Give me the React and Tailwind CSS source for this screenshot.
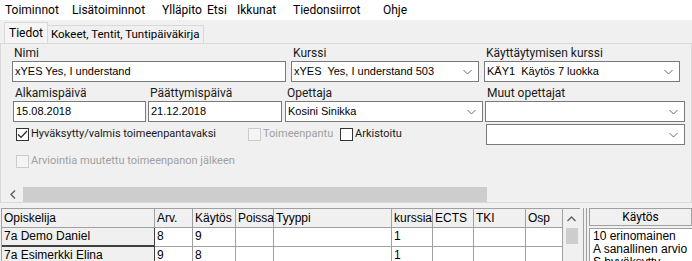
import React from 'react';

const ui = { fontFamily: 'Roboto, "Noto Sans", sans-serif' };
const classic = { fontFamily: '"Liberation Sans", Arial, sans-serif' };

const Chevron = () => (
  <svg width="9" height="6" viewBox="0 0 9 6" className="shrink-0">
    <path d="M0.5 1 L4.5 5 L8.5 1" fill="none" stroke="#6a6a6a" strokeWidth="1" />
  </svg>
);

const Field = ({ label, children, className }) => (
  <div className={`flex flex-col ${className}`}>
    <span className="text-[12px] leading-[16px] text-[#1a1a1a] pl-[2px] h-[16px]">{label}</span>
    {children}
  </div>
);

const TextBox = ({ value }) => (
  <div className="h-[21px] bg-white border border-[#7a7a7a] flex items-center px-[2px] text-[11px] text-black whitespace-pre" style={classic}>
    {value}
  </div>
);

const Select = ({ value }) => (
  <div className="h-[21px] bg-white border border-[#7a7a7a] flex items-center justify-between pl-[2px] pr-[6px] text-[11px] text-black" style={classic}>
    <span className="whitespace-pre">{value}</span>
    <Chevron />
  </div>
);

const Check = ({ label, checked, disabled }) => (
  <div className="flex items-center gap-[2px] text-[11px]">
    <div className={`w-[13px] h-[13px] shrink-0 border flex items-center justify-center ${disabled ? 'border-[#cccccc] bg-[#f4f4f4]' : 'border-[#333333] bg-white'}`}>
      {checked && (
        <svg width="11" height="9" viewBox="0 0 11 9">
          <path d="M1 4.5 L4 7.5 L10 1" fill="none" stroke="#222" strokeWidth="1.2" />
        </svg>
      )}
    </div>
    <span className={`whitespace-nowrap ${disabled ? 'text-[#a0a0a0]' : 'text-[#1a1a1a]'}`}>{label}</span>
  </div>
);

const cols = [
  { name: 'Opiskelija', w: 153 },
  { name: 'Arv.', w: 38 },
  { name: 'Käytös', w: 43 },
  { name: 'Poissa', w: 38 },
  { name: 'Tyyppi', w: 118 },
  { name: 'kurssia', w: 41 },
  { name: 'ECTS', w: 41 },
  { name: 'TKI', w: 52 },
  { name: 'Osp', w: 37 },
];

const rows = [
  ['7a Demo Daniel', '8', '9', '', '', '1', '', '', ''],
  ['7a Esimerkki Elina', '9', '8', '', '', '1', '', '', ''],
];

const menu = [
  { name: 'Toiminnot', w: 67 },
  { name: 'Lisätoiminnot', w: 90 },
  { name: 'Ylläpito', w: 45 },
  { name: 'Etsi', w: 30 },
  { name: 'Ikkunat', w: 56 },
  { name: 'Tiedonsiirrot', w: 90 },
  { name: 'Ohje', w: 40 },
];

export default function App() {
  return (
    <div className="w-[692px] h-[261px] overflow-hidden bg-[#f0f0f0] flex flex-col" style={ui}>
      {/* menu bar */}
      <div className="h-[20px] shrink-0 bg-white flex items-center pl-[5px] text-[12px] text-black">
        {menu.map((m) => (
          <span key={m.name} style={{ width: m.w }} className="shrink-0 whitespace-nowrap">
            {m.name}
          </span>
        ))}
      </div>

      {/* tabs */}
      <div className="h-[23px] shrink-0 flex items-end pl-[4px]">
        <div className="h-[21px] px-[4px] bg-[#f5f5f5] border border-[#d9d9d9] border-b-0 text-[12px] text-black flex items-center">
          Tiedot
        </div>
        <div className="h-[18px] px-[3px] bg-[#f0f0f0] border border-[#d9d9d9] border-l-0 border-b-0 text-[11.5px] text-black flex items-center whitespace-nowrap">
          Kokeet, Tentit, Tuntipäiväkirja
        </div>
      </div>

      {/* panel */}
      <div className="h-[160px] shrink-0 border border-[#d9d9d9] bg-[#f0f0f0] flex flex-col pl-[11px] pr-[6px] pt-[1px]">
        <div className="flex">
          <Field label="Nimi" className="w-[274px]">
            <TextBox value="xYES Yes, I understand" />
          </Field>
          <Field label="Kurssi" className="w-[188px] ml-[5px]">
            <Select value="xYES  Yes, I understand 503" />
          </Field>
          <Field label="Käyttäytymisen kurssi" className="w-[196px] ml-[5px]">
            <Select value="KÄY1  Käytös 7 luokka" />
          </Field>
        </div>

        <div className="flex mt-[3px]">
          <Field label="Alkamispäivä" className="w-[133px] ml-[1px]">
            <TextBox value="15.08.2018" />
          </Field>
          <Field label="Päättymispäivä" className="w-[134px] ml-[2px]">
            <TextBox value="21.12.2018" />
          </Field>
          <Field label="Opettaja" className="w-[198px] ml-[3px]">
            <Select value="Kosini Sinikka" />
          </Field>
          <Field label="Muut opettajat" className="w-[200px] ml-[2px]">
            <Select value="" />
          </Field>
        </div>

        <div className="flex items-start mt-[2px]">
          <div className="w-[473px] flex flex-col ml-[4px]">
            <div className="flex items-center h-[20px]">
              <div className="w-[232px]">
                <Check label="Hyväksytty/valmis toimeenpantavaksi" checked />
              </div>
              <div className="w-[92px]">
                <Check label="Toimeenpantu" disabled />
              </div>
              <Check label="Arkistoitu" />
            </div>
            <div className="flex items-center h-[20px] mt-[7px]">
              <Check label="Arviointia muutettu toimeenpanon jälkeen" disabled />
            </div>
          </div>
          <div className="w-[200px]">
            <Select value="" />
          </div>
        </div>

        {/* horizontal scrollbar */}
        <div className="mt-auto -ml-[10px] -mr-[5px] h-[15px] flex items-center bg-[#f0f0f0]">
          <div className="w-[21px] flex items-center justify-center">
            <svg width="6" height="9" viewBox="0 0 6 9">
              <path d="M5 0.5 L1 4.5 L5 8.5" fill="none" stroke="#606060" strokeWidth="1.4" />
            </svg>
          </div>
          <div className="w-[464px] h-[15px] bg-[#cdcdcd]" />
        </div>
      </div>

      {/* grid area */}
      <div className="flex mt-[5px] pl-[1px] flex-1 min-h-0" style={classic}>
        <div className="flex border-t border-l border-[#a0a0a0]">
          <div className="flex flex-col">
            <div className="flex h-[19px] bg-[#f0f0f0]">
              {cols.map((c) => (
                <div
                  key={c.name}
                  style={{ width: c.w }}
                  className="border-r border-b border-[#a0a0a0] text-[12px] leading-[18px] pl-[2px] text-black"
                >
                  {c.name}
                </div>
              ))}
            </div>
            {rows.map((r, i) => (
              <div key={i} className="flex h-[19px] shrink-0">
                {r.map((v, j) => (
                  <div
                    key={j}
                    style={{ width: cols[j].w }}
                    className={`text-[12px] leading-[17px] pl-[2px] text-black ${
                      j === 0
                        ? 'bg-[#f0f0f0] border-r border-b-2 border-[#404040]'
                        : 'bg-white border-r border-b border-[#a0a0a0]'
                    }`}
                  >
                    {v}
                  </div>
                ))}
              </div>
            ))}
          </div>
          {/* vertical scrollbar */}
          <div className="w-[17px] bg-[#f0f0f0] flex flex-col items-center">
            <div className="h-[19px] flex items-center justify-center">
              <svg width="9" height="6" viewBox="0 0 9 6">
                <path d="M0.5 5 L4.5 1 L8.5 5" fill="none" stroke="#606060" strokeWidth="1.4" />
              </svg>
            </div>
            <div className="w-[12px] h-[16px] bg-[#cdcdcd]" />
          </div>
        </div>

        {/* divider */}
        <div className="w-[8px] flex justify-center gap-[2px] ml-[1px]">
          <div className="w-px bg-[#a0a0a0]" />
          <div className="w-px bg-[#a0a0a0]" />
        </div>

        {/* Käytös list */}
        <div className="flex-1 flex flex-col">
          <div className="h-[18px] shrink-0 border border-[#a0a0a0] bg-[#f0f0f0] text-[12px] flex items-center justify-center text-black" style={ui}>
            Käytös
          </div>
          <div className="mt-[2px] flex-1 bg-white border-l border-t border-[#a0a0a0] pl-[3px] pt-[1px] text-[12px] leading-[13px] text-black">
            <div>10 erinomainen</div>
            <div>A sanallinen arvio</div>
            <div>S hyväksytty</div>
          </div>
        </div>
      </div>
    </div>
  );
}
